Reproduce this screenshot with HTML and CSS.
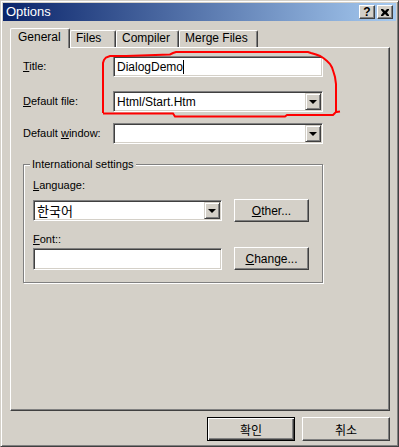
FILE: index.html
```html
<!DOCTYPE html>
<html lang="en">
<head>
    <meta charset="UTF-8">
    <title>Options</title>
    <link rel="stylesheet" href="styles.css">
</head>
<body>
    <div class="window">
        <div class="titlebar">
            <span class="title">Options</span>
            <div class="caption-buttons">
                <span class="cap-btn help">?</span>
                <span class="cap-btn close">
                    <svg width="8" height="7" viewBox="0 0 8 7">
                        <path d="M0 0h2l2 2 2-2h2v1L6 3.5 8 6v1H6L4 5 2 7H0V6l2-2.5L0 1z" fill="#000"/>
                    </svg>
                </span>
            </div>
        </div>

        <div class="client">
            <div class="tabs">
                <div class="tab active">General</div>
                <div class="tab files">Files</div>
                <div class="tab compiler">Compiler</div>
                <div class="tab merge">Merge Files</div>
            </div>

            <div class="panel">
                <div class="form-rows">
                    <div class="row row-title">
                        <label class="label"><u>T</u>itle:</label>
                        <div class="edit wide"><span class="value">DialogDemo</span><span class="caret"></span></div>
                    </div>
                    <div class="row row-file">
                        <label class="label"><u>D</u>efault file:</label>
                        <div class="edit wide combo"><span class="value">Html/Start.Htm</span><span class="drop"></span></div>
                    </div>
                    <div class="row row-window">
                        <label class="label">Default <u>w</u>indow:</label>
                        <div class="edit wide combo"><span class="value"></span><span class="drop"></span></div>
                    </div>
                </div>

                <div class="group">
                    <div class="group-caption"><span>International settings</span></div>
                    <div class="label lang-label"><u>L</u>anguage:</div>
                    <div class="group-row lang-row">
                        <div class="edit narrow combo"><span class="value korean">한국어</span><span class="drop"></span></div>
                        <div class="button"><u>O</u>ther...</div>
                    </div>
                    <div class="label font-label"><u>F</u>ont::</div>
                    <div class="group-row font-row">
                        <div class="edit narrow"><span class="value"></span></div>
                        <div class="button"><u>C</u>hange...</div>
                    </div>
                </div>
            </div>

            <div class="dialog-buttons">
                <div class="button big default"><span>확인</span></div>
                <div class="button big"><span>취소</span></div>
            </div>
        </div>

        <!-- red pen markup around the first two fields -->
        <svg class="markup" width="399" height="447" viewBox="0 0 399 447">
            <path d="M103 113 L103 63 L104 60 L106 57.5 L110 56 L126 56 L170 54.5 L173 53 L176 52 L308 52 L311 53 L316 54.5 L320 56 L324 58.5 L327 61 L330 64 L332 67.5 L333.5 72 L335 77 L336 84 L336 112 L340 111.5 M336 112 L333 115 L287 115 L285 116.5 L175 116.5 L173 113.5 L103 113.5"
                  fill="none" stroke="#ff0000" stroke-width="2"/>
        </svg>
    </div>
</body>
</html>
```

FILE: styles.css
```css
body {
    margin: 0;
    background-color: #d4d0c8;
    font-family: "Liberation Sans", Arial, sans-serif;
    font-size: 11px;
    color: #000;
}

.window {
    position: relative;
    width: 399px;
    height: 447px;
    box-sizing: border-box;
    border: 1px solid;
    border-color: #d4d0c8 #404040 #404040 #d4d0c8;
    box-shadow: inset 1px 1px #fff, inset -1px -1px #808080;
    padding: 2px;
    background-color: #d4d0c8;
    display: flex;
    flex-direction: column;
}

/* title bar */
.titlebar {
    height: 18px;
    flex: none;
    display: flex;
    align-items: center;
    justify-content: space-between;
    background: linear-gradient(to right, #0a246a, #a6caf0);
    color: #fff;
}
.title {
    padding-left: 3px;
    font-size: 13px;
    line-height: 18px;
}
.caption-buttons {
    display: flex;
    gap: 1px;
    padding-right: 3px;
}
.cap-btn {
    width: 16px;
    height: 14px;
    box-sizing: border-box;
    background-color: #d4d0c8;
    border: 1px solid;
    border-color: #fff #404040 #404040 #fff;
    box-shadow: inset -1px -1px #808080;
    display: flex;
    align-items: center;
    justify-content: center;
    color: #000;
}
.help {
    font-weight: bold;
    font-size: 12px;
    line-height: 12px;
    margin-right: 1px;
}

/* client area */
.client {
    flex: 1;
    padding: 7px 6px 0 7px;
}

.tabs {
    display: flex;
    align-items: flex-end;
    height: 19px;
}
.tab {
    position: relative;
    box-sizing: border-box;
    height: 17px;
    padding-left: 5px;
    font-size: 12px;
    line-height: 15px;
    border-top: 1px solid #fff;
    border-left: 1px solid #fff;
    border-right: 1px solid #404040;
    box-shadow: inset -1px 0 #808080;
    border-radius: 2px 2px 0 0;
    background-color: #d4d0c8;
}
.tab.active {
    height: 20px;
    width: 60px;
    padding-left: 7px;
    line-height: 17px;
    margin-bottom: -1px;
    z-index: 1;
}
.tab.files { width: 46px; }
.tab.compiler { width: 63px; }
.tab.merge { width: 79px; }

.panel {
    width: 380px;
    height: 364px;
    box-sizing: border-box;
    border: 1px solid;
    border-color: #fff #404040 #404040 #fff;
    box-shadow: inset -1px -1px #808080;
    padding: 8px 0 0 12px;
}

.row {
    display: flex;
    align-items: center;
}
.row .label {
    width: 90px;
}
.row-file { margin-top: 14px; }
.row-window { margin-top: 11px; }

.label {
    line-height: 13px;
}
.label u, .button u {
    text-decoration-thickness: 1px;
    text-underline-offset: 1px;
}

/* sunken edit field */
.edit {
    height: 21px;
    box-sizing: border-box;
    border: 1px solid;
    border-color: #808080 #fff #fff #808080;
    box-shadow: inset 1px 1px #404040, inset -1px -1px #d4d0c8;
    background-color: #fff;
    display: flex;
    align-items: center;
    padding: 2px 2px 2px 3px;
    font-size: 12px;
}
.edit.wide { width: 210px; }
.edit.narrow { width: 189px; }
.value {
    flex: 1;
}
.row-title .value {
    flex: none;
}
.caret {
    width: 1px;
    height: 14px;
    background-color: #000;
}
.korean {
    font-family: "Noto Sans CJK KR", sans-serif;
    font-size: 13px;
}

/* drop-down arrow button */
.drop {
    width: 16px;
    height: 17px;
    flex: none;
    box-sizing: border-box;
    margin-right: -1px;
    background-color: #d4d0c8;
    border: 1px solid;
    border-color: #d4d0c8 #404040 #404040 #d4d0c8;
    box-shadow: inset 1px 1px #fff, inset -1px -1px #808080;
    display: flex;
    align-items: center;
    justify-content: center;
}
.drop::after {
    content: "";
    border-top: 4px solid #000;
    border-left: 4px solid transparent;
    border-right: 4px solid transparent;
    margin-top: 1px;
}

/* group box */
.group {
    width: 300px;
    height: 119px;
    box-sizing: border-box;
    margin-top: 20px;
    padding: 0 0 0 9px;
    border: 1px solid #808080;
    box-shadow: inset 1px 1px #fff, 1px 1px #fff;
}
.group-caption {
    height: 13px;
    margin: -7px 0 0 -3px;
    line-height: 13px;
}
.group-caption span {
    display: inline-block;
    padding: 0 2px;
    background-color: #d4d0c8;
}
.lang-label { margin-top: 8px; }
.group-row {
    display: flex;
    align-items: center;
    gap: 12px;
}
.lang-row { margin-top: 7px; }
.font-label { margin-top: 11px; }
.font-row { margin-top: 1px; }
.font-row .edit { height: 22px; }

/* push buttons */
.button {
    width: 75px;
    height: 23px;
    box-sizing: border-box;
    border: 1px solid;
    border-color: #fff #404040 #404040 #fff;
    box-shadow: inset -1px -1px #808080;
    display: flex;
    align-items: center;
    justify-content: center;
    font-size: 12px;
    background-color: #d4d0c8;
}

.dialog-buttons {
    display: flex;
    justify-content: flex-end;
    gap: 7px;
    margin-top: 6px;
}
.button.big {
    width: 88px;
    height: 24px;
    font-family: "Noto Sans CJK KR", sans-serif;
    font-size: 12px;
}
.button.default {
    border: 1px solid #000;
    box-shadow: inset 1px 1px #fff, inset -1px -1px #404040, inset -2px -2px #808080;
}

.markup {
    position: absolute;
    left: -1px;
    top: -1px;
    pointer-events: none;
}
```
